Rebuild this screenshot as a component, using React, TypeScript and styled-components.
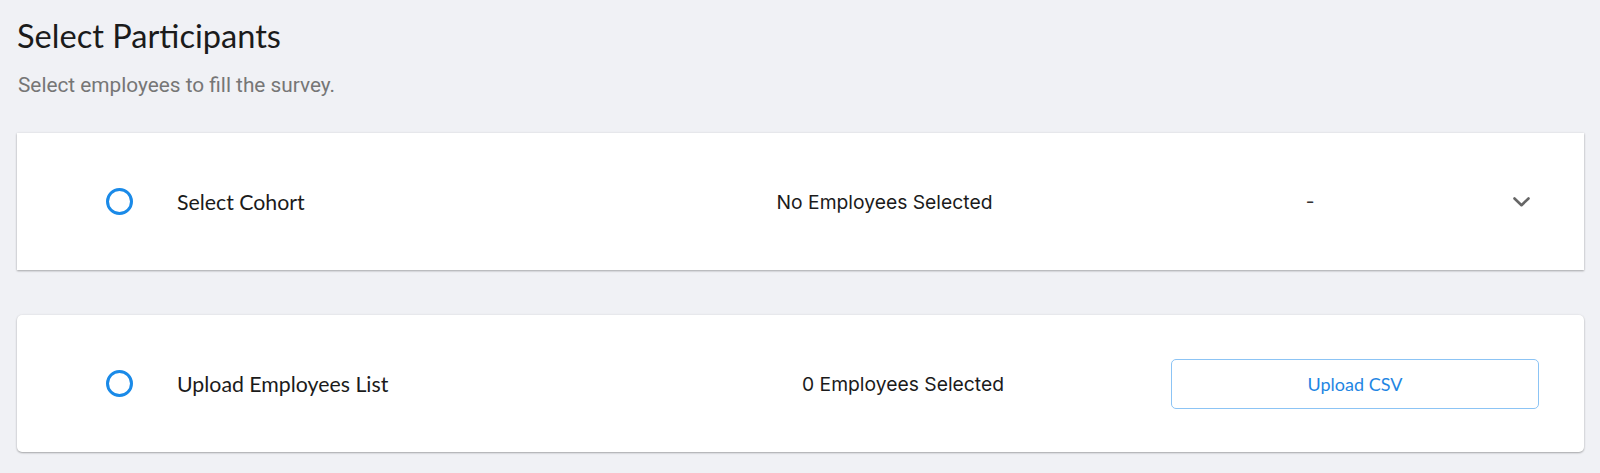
import styled, { createGlobalStyle } from "styled-components";

const GlobalStyle = createGlobalStyle`
  body {
    margin: 0;
    background: #f0f1f5;
    font-family: "Lato", "Liberation Sans", sans-serif;
    color: #1b1b1b;
  }
`;

const Page = styled.div`
  padding: 16px 16px 20px 17px;
`;

const Title = styled.h1`
  margin: 0;
  font-family: "Lato", sans-serif;
  font-weight: 400;
  font-size: 32.6px;
  line-height: 40px;
  color: #1b1b1b;
`;

const Subtitle = styled.p`
  margin: 16px 0 0 1px;
  font-family: "Roboto", sans-serif;
  font-size: 20.8px;
  line-height: 26px;
  color: #767676;
`;

const List = styled.div`
  margin-top: 35px;
  display: flex;
  flex-direction: column;
  gap: 45px;
`;

const Card = styled.div<{ $padRight: number; $radius: number }>`
  background: #fff;
  height: 137px;
  box-sizing: border-box;
  padding: 0 ${({ $padRight }) => $padRight}px 0 89px;
  border-radius: ${({ $radius }) => $radius}px;
  box-shadow: 0 1px 2px rgba(0, 0, 0, 0.3), 0 0 3px rgba(0, 0, 0, 0.06);
  display: flex;
  align-items: center;
`;

const Row = styled.div<{ $columns: string }>`
  display: grid;
  grid-template-columns: ${({ $columns }) => $columns};
  align-items: center;
  width: 100%;
`;

const Radio = styled.span`
  width: 27px;
  height: 27px;
  box-sizing: border-box;
  border: 3px solid #1a8ae8;
  border-radius: 50%;
  grid-column: 1;
`;

const Label = styled.span`
  grid-column: 3;
  font-family: "Lato", sans-serif;
  font-size: 21.3px;
  color: #1b1b1b;
`;

const Count = styled.span`
  grid-column: 4;
  text-align: center;
  font-family: "Inter", sans-serif;
  font-size: 19.3px;
  color: #1b1b1b;
`;

const Dash = styled.span`
  grid-column: 6;
  text-align: center;
  font-family: "Inter", sans-serif;
  font-size: 19px;
  color: #333;
`;

const Chevron = styled.svg`
  grid-column: 8;
  width: 17px;
  height: 10px;
`;

const UploadButton = styled.button`
  grid-column: 6;
  height: 50px;
  background: #fff;
  border: 1px solid #8cc4f5;
  border-radius: 5px;
  font-family: "Lato", sans-serif;
  font-size: 18px;
  color: #1f86e3;
  cursor: pointer;
`;

export default function App() {
  return (
    <>
      <GlobalStyle />
      <Page>
        <Title>Select Participants</Title>
        <Subtitle>Select employees to fill the survey.</Subtitle>
        <List>
          <Card $padRight={54} $radius={0}>
            <Row $columns="27px 44px 563px 289px 101px 360px 23px 17px">
              <Radio />
              <Label>Select Cohort</Label>
              <Count>No Employees Selected</Count>
              <Dash>-</Dash>
              <Chevron viewBox="0 0 17 10" fill="none">
                <path
                  d="M1.5 1.5 L8.5 8.2 L15.5 1.5"
                  stroke="#666"
                  strokeWidth="2.6"
                  strokeLinecap="round"
                  strokeLinejoin="round"
                />
              </Chevron>
            </Row>
          </Card>
          <Card $padRight={45} $radius={5}>
            <Row $columns="27px 44px 600px 252px 142px 368px">
              <Radio />
              <Label>Upload Employees List</Label>
              <Count>0 Employees Selected</Count>
              <UploadButton>Upload CSV</UploadButton>
            </Row>
          </Card>
        </List>
      </Page>
    </>
  );
}
